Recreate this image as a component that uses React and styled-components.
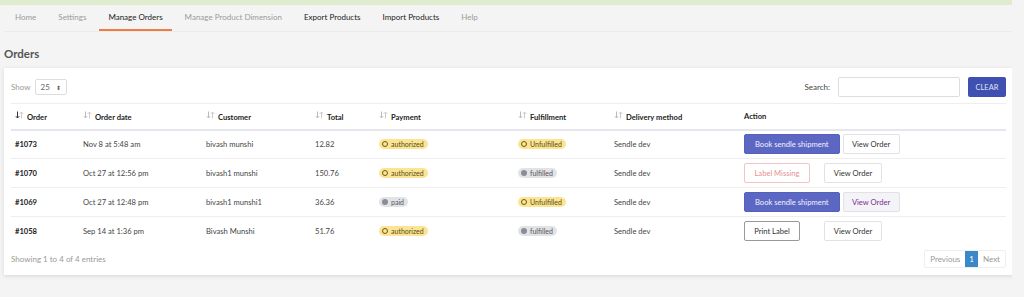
import React from "react";
import styled, { createGlobalStyle } from "styled-components";

const GlobalStyle = createGlobalStyle`
  html, body {
    margin: 0;
    padding: 0;
    background: #f4f4f4;
    font-family: "Lato", "Noto Sans", sans-serif;
    color: #333;
  }
  * { box-sizing: border-box; }
`;

const Page = styled.div`
  width: 1012px;
  height: 297px;
  overflow: hidden;
`;

const Notice = styled.div`
  height: 5px;
  background: #e0ecce;
`;

const Nav = styled.nav`
  display: flex;
  margin: 0 0 0 4px;
  padding-left: 2px;
  height: 27px;
  border-bottom: 1px solid #ebebeb;
`;

const Tab = styled.a`
  display: flex;
  align-items: center;
  padding: 0 9px;
  margin-right: 4px;
  font-size: 8px;
  color: ${(p) => (p.muted ? "#9a9a9a" : "#222")};
  border-bottom: 2px solid ${(p) => (p.active ? "#ee7d45" : "transparent")};
  white-space: nowrap;
`;

const Title = styled.h2`
  margin: 0;
  padding: 15px 0 0 4px;
  height: 36px;
  font-size: 11.5px;
  font-weight: 700;
  color: #555;
`;

const Card = styled.section`
  margin-left: 4px;
  width: 1009px;
  background: #fff;
  box-shadow: 0 1px 4px rgba(0, 0, 0, 0.12);
  padding: 8px 7px 7px 7px;
`;

const Toolbar = styled.div`
  display: flex;
  justify-content: space-between;
  align-items: center;
  height: 22px;
  margin-bottom: 5px;
`;

const Label = styled.label`
  display: flex;
  align-items: center;
  gap: 4px;
  font-size: 8px;
  color: ${(p) => p.color || "#999"};
`;

const Select = styled.div`
  display: flex;
  align-items: center;
  justify-content: space-between;
  width: 32px;
  height: 16px;
  padding: 0 5px;
  border: 1px solid #ddd;
  border-radius: 2px;
  font-size: 8px;
  color: #666;
`;

const SearchBox = styled.div`
  display: flex;
  align-items: center;
  gap: 8px;
`;

const Input = styled.div`
  width: 122px;
  height: 20px;
  border: 1px solid #ddd;
  border-radius: 2px;
`;

const ClearButton = styled.button`
  width: 38px;
  height: 20px;
  border: none;
  border-radius: 2px;
  background: #4050b0;
  color: #dfe3f7;
  font-family: inherit;
  font-size: 7.5px;
  padding: 0;
`;

const Table = styled.table`
  width: 100%;
  border-collapse: collapse;
  font-size: 7.6px;
`;

const Th = styled.th`
  text-align: left;
  font-weight: 700;
  color: #222;
  height: 26px;
  padding: 0 4px;
  border-top: 1px solid #eee;
  border-bottom: 2px solid #e6e6ee;
  white-space: nowrap;
`;

const Td = styled.td`
  height: 29px;
  padding: 0 4px;
  border-bottom: 1px solid #eee;
  color: ${(p) => (p.strong ? "#222" : "#444")};
  font-weight: ${(p) => (p.strong ? 700 : 400)};
  white-space: nowrap;
  ${(p) => p.last && "border-bottom: none;"}
`;

const SortIcon = styled.svg`
  width: 9px;
  height: 8px;
  margin-right: 3px;
  vertical-align: 1px;
`;

const Badge = styled.span`
  display: inline-flex;
  align-items: center;
  gap: 3px;
  height: 10px;
  padding: 0 4px 0 3px;
  border-radius: 5px;
  font-size: 7px;
  background: ${(p) => (p.tone === "warn" ? "#fbe594" : "#e2e3e7")};
  color: ${(p) => (p.tone === "warn" ? "#5a4a10" : "#555")};
`;

const Dot = styled.span`
  width: 6px;
  height: 6px;
  border-radius: 50%;
  ${(p) =>
    p.hollow
      ? "border: 1.2px solid #6b5a18;"
      : "background: #8a8d96;"}
`;

const Actions = styled.div`
  display: flex;
  align-items: center;
  gap: ${(p) => p.gap || 3}px;
`;

const Btn = styled.button`
  height: 20px;
  padding: 0 ${(p) => (p.variant === "primary" ? 10 : 8)}px;
  font-family: inherit;
  font-size: 7.6px;
  border-radius: 2px;
  border: 1px solid
    ${(p) =>
      p.variant === "primary"
        ? "#5560bb"
        : p.variant === "danger"
        ? "#f2c4c4"
        : p.variant === "outline"
        ? "#999"
        : "#e2e2e2"};
  background: ${(p) =>
    p.variant === "primary" ? "#5c67c3" : p.variant === "visited" ? "#f3f3f8" : "#fff"};
  color: ${(p) =>
    p.variant === "primary"
      ? "#f0f1fb"
      : p.variant === "danger"
      ? "#e88f8f"
      : p.variant === "visited"
      ? "#7b2f8e"
      : "#333"};
  min-width: ${(p) => p.w || 0}px;
`;

const Footer = styled.div`
  display: flex;
  justify-content: space-between;
  align-items: center;
  margin-top: 4px;
`;

const Info = styled.span`
  font-size: 8px;
  color: #999;
`;

const Pager = styled.div`
  display: flex;
  height: 18px;
  border: 1px solid #eee;
  border-radius: 2px;
`;

const PageLink = styled.span`
  display: flex;
  align-items: center;
  padding: 0 ${(p) => (p.active ? 4 : 5)}px;
  font-size: 8px;
  color: ${(p) => (p.active ? "#fff" : "#999")};
  background: ${(p) => (p.active ? "#3c87c8" : "transparent")};
`;

function Sort({ active }) {
  return (
    <SortIcon viewBox="0 0 9 8">
      <path
        d="M2.5 0.5 V7 M0.8 5.2 L2.5 7 L4.2 5.2"
        stroke={active ? "#333" : "#bbb"}
        strokeWidth="1"
        fill="none"
      />
      <path
        d="M6.5 7.5 V1 M4.8 2.8 L6.5 1 L8.2 2.8"
        stroke="#ccc"
        strokeWidth="1"
        fill="none"
      />
    </SortIcon>
  );
}

const rows = [
  {
    id: "#1073",
    date: "Nov 8 at 5:48 am",
    customer: "bivash munshi",
    total: "12.82",
    payment: "authorized",
    fulfil: "Unfulfilled",
    action: "book",
  },
  {
    id: "#1070",
    date: "Oct 27 at 12:56 pm",
    customer: "bivash1 munshi",
    total: "150.76",
    payment: "authorized",
    fulfil: "fulfilled",
    action: "missing",
  },
  {
    id: "#1069",
    date: "Oct 27 at 12:48 pm",
    customer: "bivash1 munshi1",
    total: "36.36",
    payment: "paid",
    fulfil: "Unfulfilled",
    action: "book-visited",
  },
  {
    id: "#1058",
    date: "Sep 14 at 1:36 pm",
    customer: "Bivash Munshi",
    total: "51.76",
    payment: "authorized",
    fulfil: "fulfilled",
    action: "print",
  },
];

function Status({ value }) {
  const warn = value === "authorized" || value === "Unfulfilled";
  return (
    <Badge tone={warn ? "warn" : "neutral"}>
      <Dot hollow={warn} />
      {value}
    </Badge>
  );
}

function RowActions({ type }) {
  if (type === "book" || type === "book-visited") {
    return (
      <Actions>
        <Btn variant="primary">Book sendle shipment</Btn>
        <Btn variant={type === "book-visited" ? "visited" : "default"} w={57}>
          View Order
        </Btn>
      </Actions>
    );
  }
  if (type === "missing") {
    return (
      <Actions gap={14}>
        <Btn variant="danger" w={66}>Label Missing</Btn>
        <Btn w={58}>View Order</Btn>
      </Actions>
    );
  }
  return (
    <Actions gap={24}>
      <Btn variant="outline" w={56}>Print Label</Btn>
      <Btn w={58}>View Order</Btn>
    </Actions>
  );
}

const headers = [
  ["Order", 68, true],
  ["Order date", 123],
  ["Customer", 109],
  ["Total", 64],
  ["Payment", 139],
  ["Fulfillment", 96],
  ["Delivery method", 130],
];

export default function App() {
  const lastIndex = rows.length - 1;
  return (
    <Page>
      <GlobalStyle />
      <Notice />
      <Nav>
        <Tab muted>Home</Tab>
        <Tab muted>Settings</Tab>
        <Tab active>Manage Orders</Tab>
        <Tab muted>Manage Product Dimension</Tab>
        <Tab>Export Products</Tab>
        <Tab>Import Products</Tab>
        <Tab muted>Help</Tab>
      </Nav>
      <Title>Orders</Title>
      <Card>
        <Toolbar>
          <Label>
            Show
            <Select>
              25
              <span style={{ fontSize: 6 }}>⬍</span>
            </Select>
          </Label>
          <SearchBox>
            <Label color="#444">Search:</Label>
            <Input />
            <ClearButton>CLEAR</ClearButton>
          </SearchBox>
        </Toolbar>
        <Table>
          <colgroup>
            {headers.map(([h, w]) => (
              <col key={h} style={{ width: w }} />
            ))}
            <col />
          </colgroup>
          <thead>
            <tr>
              {headers.map(([h, , active]) => (
                <Th key={h}>
                  <Sort active={active} />
                  {h}
                </Th>
              ))}
              <Th>Action</Th>
            </tr>
          </thead>
          <tbody>
            {rows.map((r, i) => (
              <tr key={r.id}>
                <Td strong last={i === lastIndex}>{r.id}</Td>
                <Td last={i === lastIndex}>{r.date}</Td>
                <Td last={i === lastIndex}>{r.customer}</Td>
                <Td last={i === lastIndex}>{r.total}</Td>
                <Td last={i === lastIndex}>
                  <Status value={r.payment} />
                </Td>
                <Td last={i === lastIndex}>
                  <Status value={r.fulfil} />
                </Td>
                <Td last={i === lastIndex}>Sendle dev</Td>
                <Td last={i === lastIndex}>
                  <RowActions type={r.action} />
                </Td>
              </tr>
            ))}
          </tbody>
        </Table>
        <Footer>
          <Info>Showing 1 to 4 of 4 entries</Info>
          <Pager>
            <PageLink>Previous</PageLink>
            <PageLink active>1</PageLink>
            <PageLink>Next</PageLink>
          </Pager>
        </Footer>
      </Card>
    </Page>
  );
}
